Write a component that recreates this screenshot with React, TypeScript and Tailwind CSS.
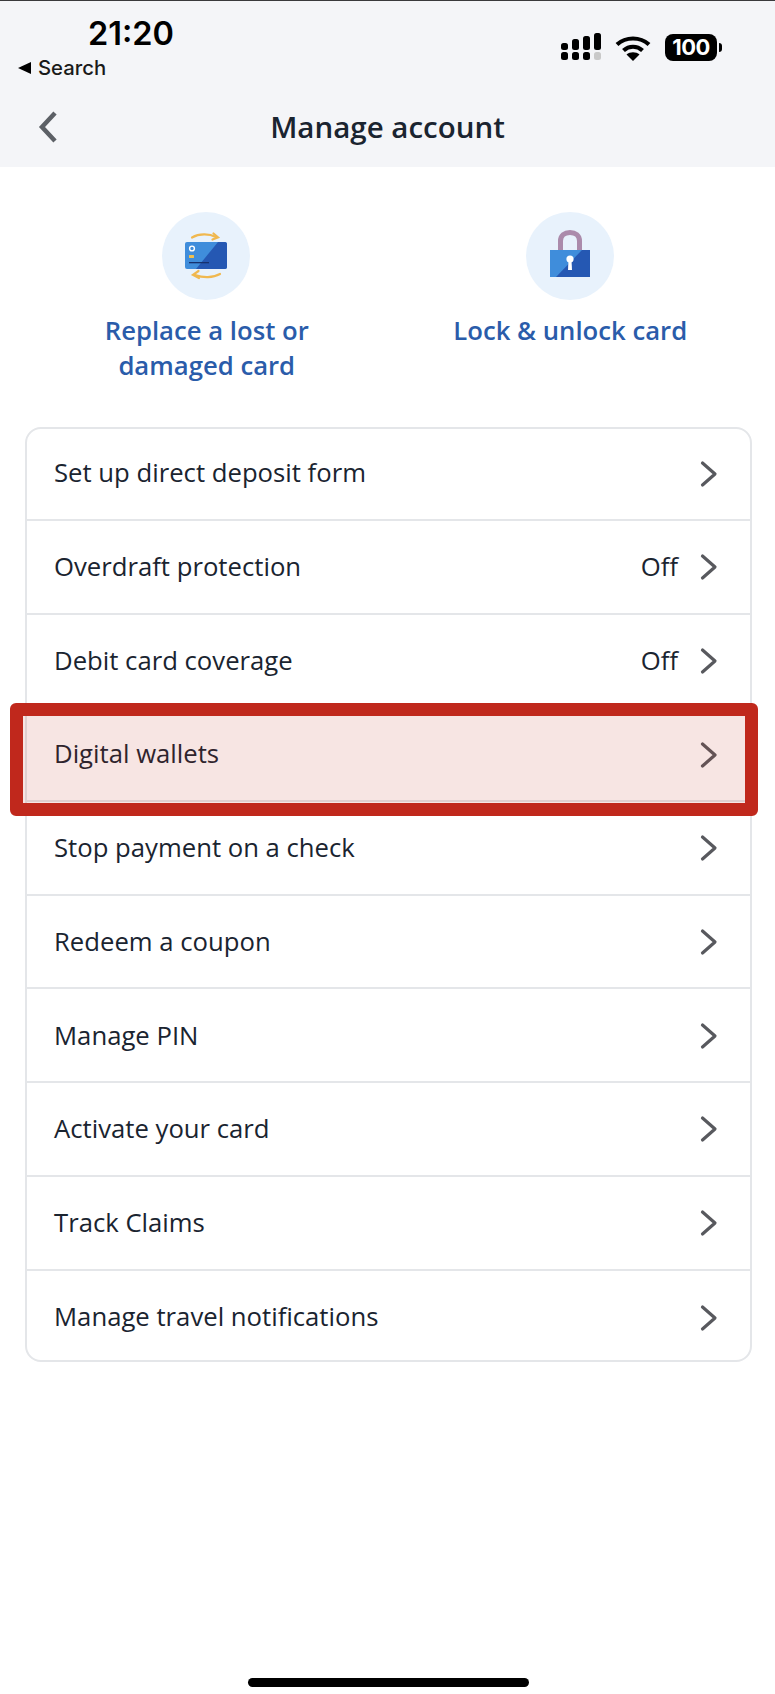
const rows = [
  { label: 'Set up direct deposit form' },
  { label: 'Overdraft protection', value: 'Off' },
  { label: 'Debit card coverage', value: 'Off' },
  { label: 'Digital wallets', highlight: true },
  { label: 'Stop payment on a check' },
  { label: 'Redeem a coupon' },
  { label: 'Manage PIN' },
  { label: 'Activate your card' },
  { label: 'Track Claims' },
  { label: 'Manage travel notifications' },
];

const StatusIcons = () => (
  <div className="flex items-center">
    {/* signal */}
    <svg width="41" height="28" viewBox="0 0 41 28" className="mr-[13px]">
      <rect x="0" y="19" width="7" height="8" rx="2.5" fill="#000" />
      <rect x="11" y="19" width="7" height="8" rx="2.5" fill="#000" />
      <rect x="22" y="19" width="7" height="8" rx="2.5" fill="#000" />
      <rect x="33" y="19" width="7" height="8" rx="2.5" fill="#c9c9c9" />
      <rect x="0" y="10" width="7" height="7" rx="2.5" fill="#000" />
      <rect x="11" y="6" width="7" height="11" rx="2.5" fill="#000" />
      <rect x="22" y="3" width="7" height="14" rx="2.5" fill="#000" />
      <rect x="33" y="0" width="7" height="17" rx="2.5" fill="#000" />
    </svg>
    {/* wifi */}
    <svg width="36" height="27" viewBox="0 0 36 27" className="mr-[14px]">
      <path d="M2 10.5C11 2.5 25 2.5 34 10.5" fill="none" stroke="#000" strokeWidth="4.2" />
      <path d="M8.5 16.5C14 11.5 22 11.5 27.5 16.5" fill="none" stroke="#000" strokeWidth="4.2" />
      <path d="M18 27L11.5 20.5C15 17.5 21 17.5 24.5 20.5Z" fill="#000" />
    </svg>
    {/* battery */}
    <div className="flex h-[27px] w-[52px] items-center justify-center rounded-[8px] bg-black font-['Inter',sans-serif] text-[22px] leading-none font-bold tracking-[-0.5px] text-white">
      100
    </div>
    <div className="ml-[2px] h-[9px] w-[3px] rounded-r-full bg-black" />
  </div>
);

const CardIcon = () => (
  <svg width="88" height="88" viewBox="0 0 88 88" className="mr-[2px]">
    <circle cx="44" cy="44" r="44" fill="#e8f2fc" />
    <path d="M30 25.5C37 21.5 47 21.5 54 25" fill="none" stroke="#f0b84f" strokeWidth="2.2" strokeLinecap="round" />
    <path d="M51.5 21.5L56 25.3L50.5 27.5" fill="none" stroke="#f0b84f" strokeWidth="2.2" strokeLinecap="round" />
    <path d="M58 62C51 66 41 66 33 63" fill="none" stroke="#f0b84f" strokeWidth="2.2" strokeLinecap="round" />
    <path d="M36.5 59L31 62.8L37 66" fill="none" stroke="#f0b84f" strokeWidth="2.2" strokeLinecap="round" />
    <rect x="23" y="30" width="42" height="27" rx="2" fill="#3f8ddb" />
    <path d="M34 57L56 30H63C64 30 65 31 65 32V55C65 56 64 57 63 57Z" fill="#2558b3" />
    <circle cx="30" cy="36.5" r="2.4" fill="none" stroke="#fff" strokeWidth="1.4" />
    <rect x="27" y="43" width="5" height="3" rx="0.5" fill="#f0c04f" />
    <rect x="27" y="50" width="20" height="1.3" fill="#16316e" />
  </svg>
);

const LockIcon = () => (
  <svg width="88" height="88" viewBox="0 0 88 88">
    <circle cx="44" cy="44" r="44" fill="#e8f2fc" />
    <path d="M34.5 39V29C34.5 23.5 38.5 20.5 44 20.5C49.5 20.5 53.5 23.5 53.5 29V39" fill="none" stroke="#ab8bab" strokeWidth="5" />
    <rect x="24" y="38" width="40" height="27" fill="#3f8ddb" />
    <path d="M30 65L56 38H64V65Z" fill="#2558b3" />
    <circle cx="44" cy="47" r="3.6" fill="#fff" />
    <path d="M42.5 48H45.5L46 58H42Z" fill="#fff" />
  </svg>
);

const App = () => {
  return (
    <div className="flex h-[1694px] w-[775px] flex-col overflow-hidden bg-white font-['Open_Sans',sans-serif]">
      {/* Header */}
      <header className="h-[167px] border-t border-[#3a3a3c] bg-[#f4f5f8]">
        <div className="flex items-start justify-between pr-[53px]">
          <div className="flex flex-col items-start pl-[18px] font-['Inter',sans-serif]">
            <span className="mt-[15px] ml-[70px] text-[32.5px] leading-[36px] font-semibold text-black">21:20</span>
            <div className="mt-[4px] flex items-center gap-[7px]">
              <svg width="13" height="12" viewBox="0 0 13 12">
                <path d="M0 6L13 0V12Z" fill="#000" />
              </svg>
              <span className="text-[20.3px] leading-[24px] font-medium text-[#1a1a1a]">Search</span>
            </div>
          </div>
          <div className="mt-[32px]">
            <StatusIcons />
          </div>
        </div>
        <div className="relative mt-[25px] flex h-[44px] items-center justify-center">
          <svg width="22" height="34" viewBox="0 0 22 34" className="absolute left-[37px]">
            <path d="M18 3L5 17L18 31" fill="none" stroke="#5c6066" strokeWidth="4.5" />
          </svg>
          <h1 className="text-[29.5px] leading-none font-semibold text-[#1a2430]">Manage account</h1>
        </div>
      </header>

      {/* Quick actions */}
      <section className="grid grid-cols-2 pt-[45px] pr-[23px] pl-[25px]">
        <div className="flex flex-col items-center">
          <CardIcon />
          <p className="mt-[13px] w-[260px] text-center text-[25.7px] leading-[35px] font-semibold text-[#2a5caa]">
            Replace a lost or damaged card
          </p>
        </div>
        <div className="flex flex-col items-center">
          <LockIcon />
          <p className="mt-[13px] text-center text-[25.7px] leading-[35px] font-semibold text-[#2a5caa]">
            Lock &amp; unlock card
          </p>
        </div>
      </section>

      {/* Menu list */}
      <div className="mt-[44px] mr-[23px] ml-[25px] rounded-[16px] border-2 border-[#e4e6e9]">
        {rows.map((row, i) => (
          <div
            key={row.label}
            className={`relative flex items-center pr-[32px] pl-[27px] text-[25.7px] text-[#1a2430] ${
              i === 0
                ? 'h-[92px] pb-[1px]'
                : i === rows.length - 1
                  ? 'h-[89.4px] pt-[5px]'
                  : 'h-[93.7px] pt-[1px]'
            } ${i < rows.length - 1 ? 'border-b-2 border-[#e4e6e9]' : ''}`}
          >
            <span className="flex-1">{row.label}</span>
            {row.value && <span className="mr-[22px]">{row.value}</span>}
            <svg width="18" height="28" viewBox="0 0 18 28" className="shrink-0">
              <path d="M2.5 3L15 14L2.5 25" fill="none" stroke="#58595e" strokeWidth="3.2" strokeLinecap="round" strokeLinejoin="round" />
            </svg>
            {row.highlight && (
              <div className="absolute top-[-5px] right-[-8px] bottom-[-16px] left-[-17px] rounded-[6px] border-[13px] border-[#c0281c] bg-[#c0281c]/12" />
            )}
          </div>
        ))}
      </div>

      {/* Home indicator */}
      <div className="mx-auto mt-auto mb-[7px] h-[9px] w-[281px] translate-x-[1px] rounded-full bg-black" />
    </div>
  );
};

export default App;
